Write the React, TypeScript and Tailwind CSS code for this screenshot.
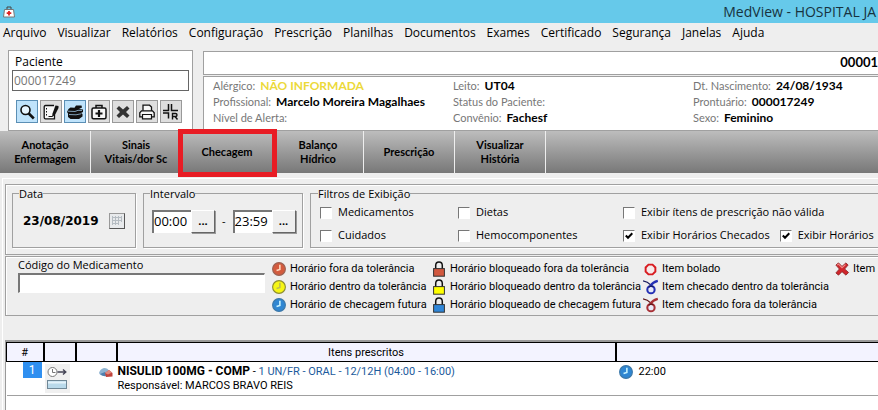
import { ReactNode } from "react";

const menus = [
  "Arquivo", "Visualizar", "Relatórios", "Configuração", "Prescrição", "Planilhas",
  "Documentos", "Exames", "Certificado", "Segurança", "Janelas", "Ajuda",
];

function Svg({ className, box = "0 0 16 16", children }: { className: string; box?: string; children: ReactNode }) {
  return (
    <svg className={`shrink-0 ${className}`} viewBox={box} fill="none" aria-hidden="true">
      {children}
    </svg>
  );
}

function Clock({ fill, ring, hand }: { fill: string; ring: string; hand: string }) {
  return (
    <Svg className="size-[14px]">
      <circle cx="8" cy="8" r="7.300" fill={fill} stroke={ring} strokeWidth="1.300" />
      <path d="M9 3v5.500L5.200 9.800" stroke={hand} strokeWidth="1.800" />
    </Svg>
  );
}

function Lock({ fill }: { fill: string }) {
  return (
    <Svg className="h-4 w-3" box="0 0 12 16">
      <path d="M2.700 8V4.500Q2.700 1 6 1t3.300 3.500V8" stroke="#111" strokeWidth="1.500" />
      <rect x=".6" y="7.600" width="10.800" height="7.600" fill={fill} stroke="#333" />
    </Svg>
  );
}

function Ribbon({ color, dark }: { color: string; dark: string }) {
  return (
    <Svg className="h-4 w-[15px]">
      <path d="M0 1.500C3 2 6 3.500 8.500 6" stroke={dark} strokeWidth="1.500" />
      <path d="M15.800 1.500C12 2.500 10 3.500 8 6.500" stroke={color} strokeWidth="2.400" />
      <circle cx="8.500" cy="10.800" r="3.900" fill="#e6eaf8" stroke={color} strokeWidth="2.200" />
      <path d="M6 8.500Q8 6.200 11 7.800" stroke={dark} strokeWidth="1.200" />
    </Svg>
  );
}

const blueClock = <Clock fill="#2f86d2" ring="#3d78a8" hand="#c8f4ff" />;

const legend: { icon: ReactNode; text: string }[][] = [
  [
    { icon: <Clock fill="#d35b3e" ring="#9a6153" hand="#ffd9c0" />, text: "Horário fora da tolerância" },
    { icon: <Clock fill="#f6f614" ring="#8d8d33" hand="#bcbc52" />, text: "Horário dentro da tolerância" },
    { icon: blueClock, text: "Horário de checagem futura" },
  ],
  [
    { icon: <Lock fill="#d1583f" />, text: "Horário bloqueado fora da tolerância" },
    { icon: <Lock fill="#ffff00" />, text: "Horário bloqueado dentro da tolerância" },
    { icon: <Lock fill="#2f86d8" />, text: "Horário bloqueado de checagem futura" },
  ],
  [
    {
      icon: (
        <Svg className="size-[13px]">
          <path d="M5.500 2h5L14 5.500v5L10.500 14h-5L2 10.500v-5z" stroke="#d81a1f" strokeWidth="2.400" fill="#f6eaea" />
        </Svg>
      ),
      text: "Item bolado",
    },
    { icon: <Ribbon color="#2430b4" dark="#151a5c" />, text: "Item checado dentro da tolerância" },
    { icon: <Ribbon color="#a83036" dark="#5c1518" />, text: "Item checado fora da tolerância" },
  ],
  [
    {
      icon: (
        <Svg className="h-[14px] w-4">
          <path d="M1 3.500L4 1l4 4 4.500-4L15 3.500 11 8l4.500 4-3 3L8 11l-4 4-3-2.500L5 8z" fill="#d0252b" stroke="#8f2a2c" />
          <path d="M2.500 3.500L4 2.500l4 4 4-3.500" stroke="#f08a88" strokeWidth="1.300" />
        </Svg>
      ),
      text: "Item",
    },
  ],
];

const tools: { label: string; active?: boolean; icon: ReactNode }[] = [
  {
    label: "Pesquisar",
    active: true,
    icon: (
      <>
        <circle cx="6.500" cy="6" r="4.500" stroke="#111" strokeWidth="1.600" fill="#e8f6ff" />
        <path d="M9.800 9.500l5 5" stroke="#111" strokeWidth="2.600" />
      </>
    ),
  },
  {
    label: "Anotar",
    icon: (
      <>
        <path d="M11 1.500H2.500Q1.200 1.500 1.200 3v10.500q0 1.300 1.300 1.300h9V11" stroke="#111" strokeWidth="1.300" fill="#f7f7f7" />
        <path d="M3.500 4v9" stroke="#111" strokeDasharray="1.500 1.500" />
        <path d="M15.500 2l-3-.5-3 8-.5 3.500 3-2 3.500-7z" fill="#111" />
        <path d="M5.500 12.500h4" stroke="#111" />
      </>
    ),
  },
  {
    label: "Prontuários",
    active: true,
    icon: (
      <>
        <path d="M1.500 5L3.500 3.500l4 .3L9 1.500h5.500l.5 2-3 1.500 4 .5v2.500l-2 1 1.500 1v2.500L12 15H3.500L1 13V9.500L0 8z" fill="#111" />
        <path d="M1 7.200l7 .3 3-1.200 4 .2M2 10.500l7 .3 5-1" stroke="#9cc4df" strokeWidth=".8" />
      </>
    ),
  },
  {
    label: "Atendimento",
    icon: (
      <>
        <path d="M5 4V1.500h6V4" stroke="#111" strokeWidth="1.500" />
        <rect x="1" y="4" width="14" height="10.800" rx="1.500" stroke="#111" strokeWidth="1.500" fill="#f7f7f7" />
        <path d="M8 6v7M4.500 9.500h7" stroke="#111" strokeWidth="2.200" />
      </>
    ),
  },
  {
    label: "Limpar",
    icon: <path d="M1.500 4.500l2.500-2.500 4 3.500L12 2l2.500 2.500L11 8l3.500 3.500L12 14l-4-3.500L4 14l-2.500-2.500L5 8z" fill="#333" />,
  },
  {
    label: "Imprimir",
    icon: (
      <>
        <path d="M4 7V1.200h6.500L12.500 3v4" stroke="#111" strokeWidth="1.300" fill="#f7f7f7" />
        <path d="M2.500 6.800h11l1.700 2v4H.8v-4z" stroke="#111" strokeWidth="1.300" fill="#f7f7f7" />
        <path d="M3.500 10.500h9v4.300h-9z" stroke="#111" strokeWidth="1.200" fill="#f7f7f7" />
      </>
    ),
  },
  {
    label: "Receita",
    icon: (
      <>
        <path d="M5.500 0v6.500H0M8.500 0v6.500H15M0 9h5.500v5.500" stroke="#111" strokeWidth="1.500" />
        <path d="M9.500 15.500v-6h3q1.500 0 1.500 1.500t-1.500 1.500h-3m2.500 0l2.500 3" stroke="#111" strokeWidth="1.400" />
      </>
    ),
  },
];

const info = [
  [
    ["Alérgico:", "NÃO INFORMADA"],
    ["Profissional:", "Marcelo Moreira Magalhaes"],
    ["Nível de Alerta:", ""],
  ],
  [
    ["Leito:", "UT04"],
    ["Status do Paciente:", ""],
    ["Convênio:", "Fachesf"],
  ],
  [
    ["Dt. Nascimento:", "24/08/1934"],
    ["Prontuário:", "000017249"],
    ["Sexo:", "Feminino"],
  ],
];

const tabs = ["Anotação Enfermagem", "Sinais Vitais/dor Sc", "Checagem", "Balanço Hídrico", "Prescrição", "Visualizar História"];

function Check({ label, checked = false }: { label: string; checked?: boolean }) {
  return (
    <label className="flex items-center gap-[6px]">
      <span className="grid size-3 place-items-center">
        <input
          type="checkbox"
          defaultChecked={checked}
          className="peer col-start-1 row-start-1 size-3 appearance-none border border-t-[#777] border-r-white border-b-white border-l-[#777] bg-white"
        />
        <svg className="pointer-events-none invisible col-start-1 row-start-1 size-2 peer-checked:visible" viewBox="0 0 8 8" fill="none" aria-hidden="true">
          <path d="M.8 3.500L3 5.800 7.300 1.300" stroke="#000" strokeWidth="2" />
        </svg>
      </span>
      {label}
    </label>
  );
}

function Time({ label, value }: { label: string; value: string }) {
  return (
    <div className="flex h-[23px]">
      <input
        aria-label={label}
        defaultValue={value}
        className="w-[39px] border-t-2 border-l-2 border-[#777] bg-white text-[13px]"
      />
      <button
        aria-label={`Escolher ${label}`}
        className="w-6 border border-t-white border-r-[#666] border-b-[#666] border-l-white bg-[#eee] text-[11px] font-bold shadow-[1px_1px_0_#999]"
      >
        ...
      </button>
    </div>
  );
}

const group = "border border-[#a0a0a0] shadow-[1px_1px_0_#fff] h-[63px]";
const groupTitle = "pt-[2px] leading-[14px]";

export default function App() {
  return (
    <div className="flex min-h-screen w-full flex-col overflow-hidden bg-[#eeeeee] font-['Open_Sans',sans-serif] text-[11px] whitespace-nowrap text-black">
      <header className="flex h-[23px] items-center justify-between bg-[#66c9ea] pr-[2px] pl-[3px]">
        <Svg className="h-3 w-3" box="0 0 12 12">
          <path d="M4 3V1h4v2" stroke="#444" />
          <path d="M1.500 3.500h9l1 7.500H.5z" fill="#fff" stroke="#777" />
          <path d="M6 5v4.500M3.700 7.200h4.600" stroke="#d22" strokeWidth="1.800" />
        </Svg>
        <h1 className="text-[14px] leading-[23px] text-[#17333e]">MedView - HOSPITAL JA</h1>
      </header>

      <nav className="flex h-[27px] gap-[11px] pl-[3px] text-[12px] leading-5">
        {menus.map((m) => (
          <button key={m} className="h-5">{m}</button>
        ))}
      </nav>

      <div className="flex gap-[10px] pl-2 font-['Lato',sans-serif] text-[12px]">
        <section className="flex w-[185px] flex-col border border-[#a0a0a0] bg-white px-[3px] pt-[3px] pb-[7px]">
          <label htmlFor="paciente" className="pl-[3px] font-['Open_Sans',sans-serif] leading-4">Paciente</label>
          <input id="paciente" defaultValue="000017249" className="h-[21px] w-full border border-[#666] bg-white px-px font-['Open_Sans',sans-serif] text-[12px] text-[#777]" />
          <div className="mt-[9px] flex gap-[2px] pl-1">
            {tools.map((t) => (
              <button
                key={t.label}
                aria-label={t.label}
                className={`grid h-[23px] w-[22px] place-items-center border ${t.active ? "border-[#5b8fb5] bg-[#bfe3fb]" : "border-[#999] bg-[#dedede]"}`}
              >
                <Svg className="size-4">{t.icon}</Svg>
              </button>
            ))}
          </div>
        </section>
        <section className="flex min-w-0 flex-1 flex-col gap-px pt-px">
          <div className="flex h-6 items-center justify-end border border-r-0 border-[#a0a0a0] bg-white text-[13px] font-bold">00001</div>
          <div className="flex flex-1 border border-r-0 border-[#a0a0a0] bg-white pt-px pl-[9px] leading-4">
            {info.map((col, i) => (
              <dl key={i} className="w-60 shrink-0">
                {col.map(([k, v]) => (
                  <div key={k} className="flex items-baseline gap-[5px]">
                    <dt className="text-[11px] leading-4 text-[#777]">{k}</dt>
                    <dd className={`font-bold ${v === "NÃO INFORMADA" ? "text-[#ecd93a]" : ""}`}>{v}</dd>
                  </div>
                ))}
              </dl>
            ))}
          </div>
        </section>
      </div>

      <nav className="relative flex h-[42px] bg-linear-to-b from-[#bdbdbd] to-[#787878] font-['Lato',sans-serif] text-[11px] leading-[14px] font-bold">
        {tabs.map((t) => (
          <button key={t} className="w-[91px] border-r border-[#eee] px-[10px] whitespace-normal">{t}</button>
        ))}
        <div className="pointer-events-none absolute top-[-2px] left-[178px] h-12 w-[99px] border-[5px] border-[#e81c24]" />
      </nav>

      <main className="mt-[5px] ml-[2px] flex flex-1 flex-col border-t border-l border-white pt-[5px] pl-[2px]">
        <section className="flex gap-[7px] border border-r-0 border-[#a0a0a0] pb-[6px] pl-[6px] shadow-[inset_1px_1px_0_#fff]">
          <fieldset className={`${group} w-[124px] px-[6px]`}>
            <legend className={groupTitle}>Data</legend>
            <div className="flex h-10 items-center justify-between px-1">
              <span className="font-['DejaVu_Sans',sans-serif] text-[12px] font-bold">23/08/2019</span>
              <button aria-label="Abrir calendário" className="grid size-4 place-items-center border border-t-[#999] border-r-[#555] border-b-[#555] border-l-[#999] bg-[#e8eaec]">
                <Svg className="size-3" box="0 0 12 12">
                  <path d="M1 2.500h10M1 5.500h10M1 8.500h7M1.500 1v9M4.500 1v9M7.500 1v9M10.500 1v6" stroke="#b5bcc2" />
                </Svg>
              </button>
            </div>
          </fieldset>
          <fieldset className={`${group} w-40 px-[6px]`}>
            <legend className={groupTitle}>Intervalo</legend>
            <div className="flex h-10 items-center gap-[7px] pl-[2px]">
              <Time label="hora inicial" value="00:00" />
              <span>-</span>
              <Time label="hora final" value="23:59" />
            </div>
          </fieldset>
          <fieldset className={`${group} min-w-0 flex-1 border-r-0 pl-[7px]`}>
            <legend className={groupTitle}>Filtros de Exibição</legend>
            <div className="grid grid-cols-[138px_165px_auto] grid-rows-[23px_23px] justify-start pl-[2px]">
              <Check label="Medicamentos" />
              <Check label="Dietas" />
              <Check label="Exibir ítens de prescrição não válida" />
              <Check label="Cuidados" />
              <Check label="Hemocomponentes" />
              <div className="flex gap-[10px]">
                <Check label="Exibir Horários Checados" checked />
                <Check label="Exibir Horários" checked />
              </div>
            </div>
          </fieldset>
        </section>

        <section className="mt-px flex h-[60px] border border-r-0 border-[#a0a0a0] shadow-[inset_1px_1px_0_#fff]">
          <div className="flex w-[265px] shrink-0 flex-col pl-3">
            <label htmlFor="codigo" className="leading-4">Código do Medicamento</label>
            <input id="codigo" className="h-5 w-[247px] border-t-2 border-r border-b border-l-2 border-t-[#777] border-r-white border-b-white border-l-[#777] bg-white px-1" />
          </div>
          <div className="grid grid-cols-[160px_212px_191px_auto] pt-[3px] font-['Roboto',sans-serif]">
            {legend.map((col, i) => (
              <ul key={i}>
                {col.map((item) => (
                  <li key={item.text} className="flex h-[18px] items-center gap-1">
                    <span className="flex w-[15px] justify-center">{item.icon}</span>
                    {item.text}
                  </li>
                ))}
              </ul>
            ))}
          </div>
        </section>

        <div className="mt-6 flex-1 border-t-2 border-l border-[#999] bg-white font-['Roboto',sans-serif]">
          <table className="w-full table-fixed border-collapse text-left">
            <colgroup>
              <col className="w-[37px]" />
              <col className="w-8" />
              <col className="w-[41px]" />
              <col className="w-[499px]" />
              <col />
            </colgroup>
            <thead>
              <tr className="h-[19px] border-t border-b border-black bg-[#f3f3ff] text-center leading-[17px]">
                <th className="border-r-2 border-l border-black p-0 font-normal">#</th>
                <th className="border-r-2 border-black p-0" />
                <th className="border-r-2 border-black p-0" />
                <th className="border-r-2 border-black p-0 font-normal">Itens prescritos</th>
                <th className="p-0" />
              </tr>
            </thead>
            <tbody>
              <tr className="h-[34px] border-b border-[#a0a0a0] align-top">
                <td className="p-0 pr-[2px]">
                  <span className="ml-auto block h-4 w-[19px] bg-[#2f8ff0] text-center text-[12px] leading-4 text-white">1</span>
                </td>
                <td className="p-0 pt-[2px] pl-px">
                  <span className="flex h-[29px] w-[25px] justify-center bg-[#f0f0f0]">
                    <Svg className="h-7 w-[22px]" box="0 0 22 28">
                      <circle cx="6.500" cy="8" r="4.500" fill="#fff" stroke="#777" />
                      <path d="M6.500 5v3.500h3" stroke="#777" />
                      <path d="M11.500 8h8M17 5.500L19.800 8 17 10.500" stroke="#445" strokeWidth="1.400" />
                      <rect x="1.500" y="16.500" width="19" height="8" fill="#b9d9ea" stroke="#6f8796" />
                      <path d="M2 18.500h18" stroke="#e4f2fa" strokeWidth="2" />
                    </Svg>
                  </span>
                </td>
                <td className="p-0 pt-[5px] pr-1">
                  <Svg className="ml-auto h-[11px] w-[15px]" box="0 0 15 11">
                    <path d="M1 6q1-4 5-5 4 0 5 3l-4 5Q2 9 1 6z" fill="#8fb4d2" />
                    <path d="M2 7q4 3 6 2l-1-4z" fill="#4f7fae" />
                    <path d="M7 6l4-3 3.500 3v3.500L8 10z" fill="#c1443c" />
                    <path d="M7 6l4-3 3 2.500-4 2z" fill="#e08a80" />
                  </Svg>
                </td>
                <td className="p-0 pt-[2px] pl-px leading-[14px]">
                  <div>
                    <b className="text-[12px]">NISULID 100MG - COMP</b> - <span className="text-[#1c5a9c]">1 UN/FR - ORAL - 12/12H (04:00 - 16:00)</span>
                  </div>
                  <div>Responsável: MARCOS BRAVO REIS</div>
                </td>
                <td className="p-0 pt-[2px] pl-[3px]">
                  <span className="flex items-center gap-[6px]">
                    {blueClock}
                    22:00
                  </span>
                </td>
              </tr>
            </tbody>
          </table>
        </div>
      </main>
    </div>
  );
}
